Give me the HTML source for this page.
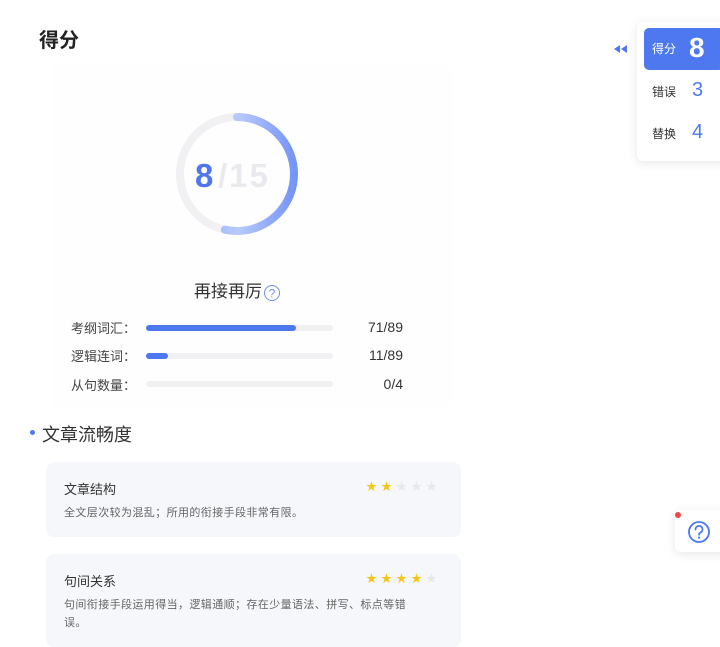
<!DOCTYPE html>
<html><head><meta charset="utf-8"><style>
*{margin:0;padding:0;box-sizing:border-box}
body{width:720px;height:647px;background:#fff;font-family:"Liberation Sans","Noto Sans CJK SC",sans-serif;position:relative;overflow:hidden;color:#333}
.abs{position:absolute}
.bg{left:53px;top:66px;width:400px;height:340px;background:#fefefe}
h1{position:absolute;left:39px;top:24px;font-size:20px;font-weight:bold;color:#222}
.lbl{font-size:13px;color:#444}
.bar{height:6px;border-radius:3px;background:#f1f1f3;left:146px;width:187px}
.fill{height:6px;border-radius:3px;background:#4d78f0}
.val{font-size:14px;color:#333;text-align:right;width:60px;left:343px}
.card{left:46px;width:415px;background:#f6f7fa;border-radius:8px}
.ct{font-size:13px;color:#333}
.cd{font-size:11px;color:#666;line-height:18px;letter-spacing:0.4px}
.star{font-size:11px;letter-spacing:4px}
.panel{left:637px;top:22px;width:90px;height:139px;background:#fff;border-radius:6px;box-shadow:0 2px 10px rgba(0,0,0,.1)}
</style></head><body>
<div class="abs bg"></div>
<h1>得分</h1>
<svg class="abs" style="left:0;top:0" width="460" height="260">
<defs><linearGradient id="g" x1="0" y1="0" x2="0" y2="1"><stop offset="0" stop-color="#7c9cf7"/><stop offset="0.5" stop-color="#b9cafc"/><stop offset="1" stop-color="#7595f6"/></linearGradient></defs>
<circle cx="237" cy="174" r="57" fill="none" stroke="#f1f1f3" stroke-width="8"/>
<circle cx="237" cy="174" r="57" fill="none" stroke="url(#g)" stroke-width="8" stroke-linecap="round" stroke-dasharray="191 400" transform="rotate(-90 237 174)"/>
<text x="195" y="187" font-family="Liberation Sans" font-weight="bold" font-size="33" fill="#4f76ee">8</text>
<text x="218" y="187" font-family="Liberation Sans" font-weight="bold" font-size="33" fill="#e9eaee" letter-spacing="2">/15</text>
</svg>
<div class="abs" style="left:194px;top:277px;font-size:17px;color:#333">再接再厉</div>
<svg class="abs" style="left:263px;top:284px" width="18" height="18"><circle cx="9" cy="9" r="7.5" fill="none" stroke="#6f8ff0" stroke-width="1"/><text x="9" y="13.5" text-anchor="middle" font-size="12" fill="#6f8ff0" font-family="Liberation Sans">?</text></svg>

<div class="abs lbl" style="left:71px;top:318px">考纲词汇：</div>
<div class="abs bar" style="top:325px"><div class="fill" style="width:150px"></div></div>
<div class="abs val" style="top:319px">71/89</div>
<div class="abs lbl" style="left:71px;top:346px">逻辑连词：</div>
<div class="abs bar" style="top:353px"><div class="fill" style="width:22px"></div></div>
<div class="abs val" style="top:347px">11/89</div>
<div class="abs lbl" style="left:71px;top:375px">从句数量：</div>
<div class="abs bar" style="top:381px"></div>
<div class="abs val" style="top:376px">0/4</div>

<div class="abs" style="left:30px;top:430px;width:5px;height:5px;border-radius:50%;background:#4d78f0"></div>
<div class="abs" style="left:42px;top:421px;font-size:18px;color:#333">文章流畅度</div>

<div class="abs card" style="top:462px;height:75px"></div>
<div class="abs ct" style="left:64px;top:479px">文章结构</div>
<div class="abs star" style="left:366px;top:478px"><span style="color:#f5c518">★★</span><span style="color:#e8e8ea">★★★</span></div>
<div class="abs cd" style="left:64px;top:504px">全文层次较为混乱；所用的衔接手段非常有限。</div>

<div class="abs card" style="top:554px;height:93px"></div>
<div class="abs ct" style="left:64px;top:571px">句间关系</div>
<div class="abs star" style="left:366px;top:570px"><span style="color:#f5c518">★★★★</span><span style="color:#e8e8ea">★</span></div>
<div class="abs cd" style="left:64px;top:596px;width:362px">句间衔接手段运用得当，逻辑通顺；存在少量语法、拼写、标点等错误。</div>

<svg class="abs" style="left:613px;top:44px" width="16" height="10"><path d="M1 5 L7 1 L7 9Z M8 5 L14 1 L14 9Z" fill="#4d78f0"/></svg>
<div class="abs panel"></div>
<div class="abs" style="left:644px;top:28px;width:80px;height:42px;background:#4d78f0;border-radius:5px"></div>
<div class="abs" style="left:652px;top:40px;font-size:12px;color:#fff">得分</div>
<div class="abs" style="left:689px;top:32px;font-size:28px;font-weight:bold;color:#fff">8</div>
<div class="abs" style="left:652px;top:83px;font-size:12px;color:#333">错误</div>
<div class="abs" style="left:692px;top:79px;font-size:20px;color:#4d78f0">3</div>
<div class="abs" style="left:652px;top:125px;font-size:12px;color:#333">替换</div>
<div class="abs" style="left:692px;top:121px;font-size:20px;color:#4d78f0">4</div>

<div class="abs" style="left:675px;top:510px;width:60px;height:42px;background:#fff;border-radius:6px;box-shadow:0 2px 10px rgba(0,0,0,.1)"></div>
<div class="abs" style="left:675px;top:512px;width:6px;height:6px;border-radius:50%;background:#f04848"></div>
<svg class="abs" style="left:687px;top:520px" width="24" height="24"><circle cx="12" cy="12" r="10" fill="none" stroke="#4d78f0" stroke-width="1.8"/><path d="M8.5 9.5a3.5 3.5 0 1 1 5 3.1c-1 .5-1.5 1.1-1.5 2.2" fill="none" stroke="#4d78f0" stroke-width="1.8" stroke-linecap="round"/><circle cx="12" cy="17.6" r="1.1" fill="#4d78f0"/></svg>
</body></html>
